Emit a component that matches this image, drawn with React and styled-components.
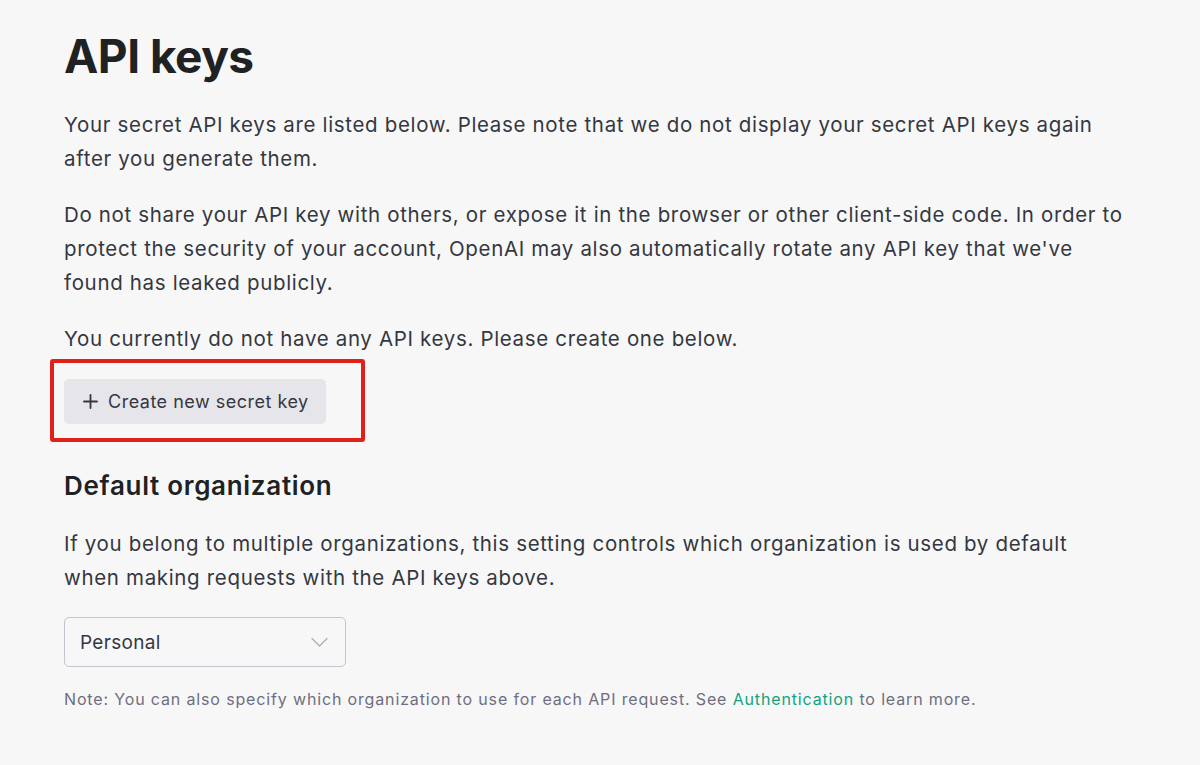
import styled, { createGlobalStyle } from "styled-components";

const GlobalStyle = createGlobalStyle`
  html, body {
    margin: 0;
    padding: 0;
    background: #f7f7f8;
  }
  body {
    font-family: Inter, "Noto Sans", sans-serif;
    color: #353740;
  }
`;

const Page = styled.main`
  width: 1063px;
  padding: 26px 0 0 64px;
`;

const Title = styled.h1`
  margin: 0 0 22px;
  font-size: 46px;
  line-height: 60px;
  font-weight: 700;
  color: #202123;
  letter-spacing: -0.5px;
`;

const Text = styled.p`
  margin: 0 0 22px;
  font-size: 20.5px;
  line-height: 34px;
  letter-spacing: 0.66px;
`;

const Highlight = styled.div`
  display: inline-block;
  margin: -19px 0 0 -14px;
  padding: 16px 35px 14px 10px;
  border: 4px solid #e0201b;
  border-radius: 3px;
`;

const Button = styled.button`
  display: flex;
  align-items: center;
  gap: 10px;
  height: 45px;
  padding: 0 17px 0 19px;
  border: none;
  border-radius: 5px;
  background: #e5e5ea;
  color: #353740;
  font-family: inherit;
  font-size: 18px;
  letter-spacing: 0.5px;
  cursor: pointer;
`;

const SubTitle = styled.h2`
  margin: 27px 0 24px;
  font-size: 26px;
  line-height: 34px;
  font-weight: 600;
  color: #202123;
  letter-spacing: 0.7px;
`;

const Select = styled.div`
  display: flex;
  align-items: center;
  justify-content: space-between;
  box-sizing: border-box;
  width: 282px;
  height: 50px;
  margin-top: 20px;
  padding: 0 17px 0 15px;
  border: 1px solid #c5c5d2;
  border-radius: 5px;
  font-size: 19px;
  letter-spacing: 0.3px;
  color: #353740;
`;

const Note = styled.p`
  margin: 20px 0 0;
  font-size: 16px;
  line-height: 24px;
  letter-spacing: 0.85px;
  color: #6e6e80;
`;

const Link = styled.a`
  color: #10a37f;
  text-decoration: none;
`;

const PlusIcon = () => (
  <svg width="15" height="15" viewBox="0 0 15 15" fill="none">
    <path d="M7.5 1v13M1 7.5h13" stroke="#353740" strokeWidth="1.8" strokeLinecap="round" />
  </svg>
);

const ChevronIcon = () => (
  <svg width="17" height="10" viewBox="0 0 17 10" fill="none">
    <path d="M1 1.5l7.5 7.5 7.5-7.5" stroke="#acacbe" strokeWidth="1.3" strokeLinecap="round" strokeLinejoin="round" />
  </svg>
);

export default function App() {
  return (
    <Page>
      <GlobalStyle />
      <Title>API keys</Title>
      <Text>
        Your secret API keys are listed below. Please note that we do not display your secret API keys again after you
        generate them.
      </Text>
      <Text>
        Do not share your API key with others, or expose it in the browser or other client-side code. In order to
        protect the security of your account, OpenAI may also automatically rotate any API key that we've found has
        leaked publicly.
      </Text>
      <Text>You currently do not have any API keys. Please create one below.</Text>
      <Highlight>
        <Button>
          <PlusIcon />
          Create new secret key
        </Button>
      </Highlight>
      <SubTitle>Default organization</SubTitle>
      <Text>
        If you belong to multiple organizations, this setting controls which organization is used by default when
        making requests with the API keys above.
      </Text>
      <Select>
        Personal
        <ChevronIcon />
      </Select>
      <Note>
        Note: You can also specify which organization to use for each API request. See{" "}
        <Link href="#">Authentication</Link> to learn more.
      </Note>
    </Page>
  );
}
